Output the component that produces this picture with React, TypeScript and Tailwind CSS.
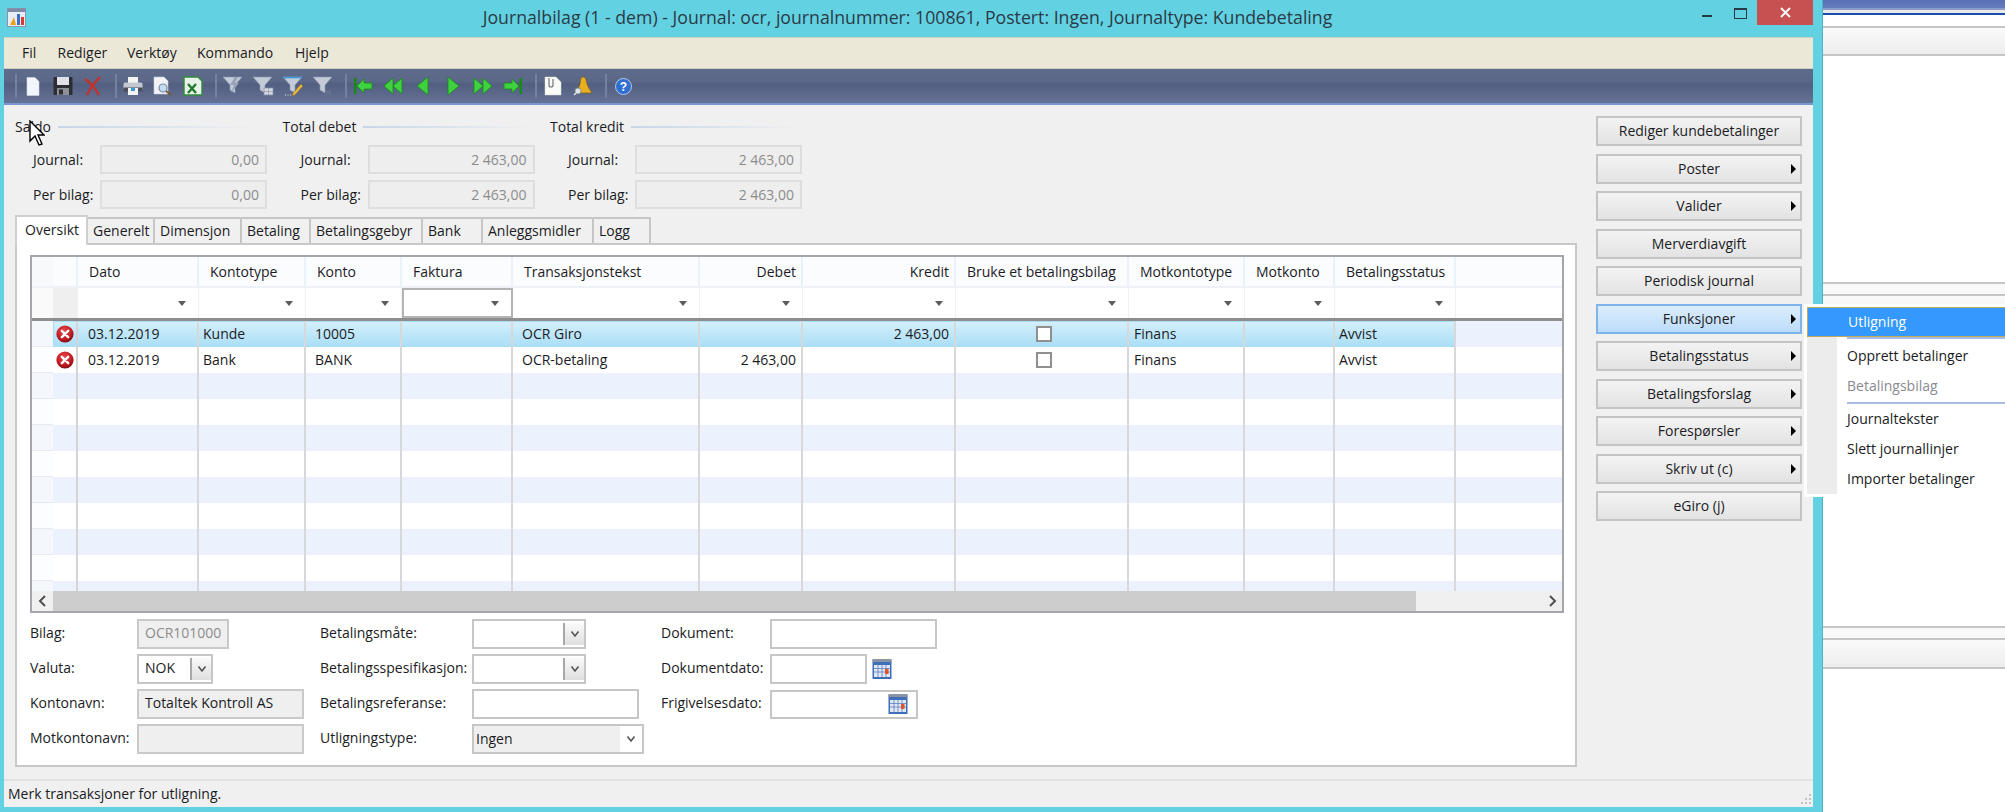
const columns = [
  { name: 'Dato', w: 121, pad: 'pl-[10px]' },
  { name: 'Kontotype', w: 107, pad: 'pl-[4px]' },
  { name: 'Konto', w: 96, pad: 'pl-[9px]' },
  { name: 'Faktura', w: 111, pad: 'pl-[4px]' },
  { name: 'Transaksjonstekst', w: 187, pad: 'pl-[9px]' },
  { name: 'Debet', w: 103, right: true },
  { name: 'Kredit', w: 153, right: true },
  { name: 'Bruke et betalingsbilag', w: 173, pad: 'pl-[4px]' },
  { name: 'Motkontotype', w: 116, pad: 'pl-[5px]' },
  { name: 'Motkonto', w: 90, pad: 'pl-[4px]' },
  { name: 'Betalingsstatus', w: 121, pad: 'pl-[4px]' },
];

const rows = [
  ['03.12.2019', 'Kunde', '10005', '', 'OCR Giro', '', '2 463,00', '', 'Finans', '', 'Avvist'],
  ['03.12.2019', 'Bank', 'BANK', '', 'OCR-betaling', '2 463,00', '', '', 'Finans', '', 'Avvist'],
];

const sideButtons = [
  { label: 'Rediger kundebetalinger' },
  { label: 'Poster', arrow: true },
  { label: 'Valider', arrow: true },
  { label: 'Merverdiavgift' },
  { label: 'Periodisk journal' },
  { label: 'Funksjoner', arrow: true, active: true },
  { label: 'Betalingsstatus', arrow: true },
  { label: 'Betalingsforslag', arrow: true },
  { label: 'Forespørsler', arrow: true },
  { label: 'Skriv ut (c)', arrow: true },
  { label: 'eGiro (j)' },
];

const tabs = [
  { label: 'Generelt', w: 67 },
  { label: 'Dimensjon', w: 87 },
  { label: 'Betaling', w: 69 },
  { label: 'Betalingsgebyr', w: 112 },
  { label: 'Bank', w: 60 },
  { label: 'Anleggsmidler', w: 111 },
  { label: 'Logg', w: 57 },
];

function Funnel({ children }: { children?: React.ReactNode }) {
  return (
    <svg width="22" height="20" viewBox="0 0 22 20">
      <path d="M1 1h19l-7 8v8l-5-3V9z" fill="#c3cad8" stroke="#8c97ae" strokeWidth="0.6" />
      {children}
    </svg>
  );
}

function Arrow({ kind }: { kind: string }) {
  const fill = '#3fd13f';
  const line = '#168a16';
  const shapes: Record<string, React.ReactNode> = {
    first: (
      <>
        <rect x="1" y="2" width="2.4" height="16" fill={line} />
        <path d="M4 10l7-7v4h8v6h-8v4z" fill={fill} stroke={line} strokeWidth="0.8" />
      </>
    ),
    rew: (
      <>
        <path d="M1 10l9-8v16z" fill={fill} stroke={line} strokeWidth="0.8" />
        <path d="M10 10l9-8v16z" fill={fill} stroke={line} strokeWidth="0.8" />
      </>
    ),
    prev: <path d="M4 10l11-9v18z" fill={fill} stroke={line} strokeWidth="0.8" />,
    next: <path d="M16 10L5 1v18z" fill={fill} stroke={line} strokeWidth="0.8" />,
    fwd: (
      <>
        <path d="M10 10L1 2v16z" fill={fill} stroke={line} strokeWidth="0.8" />
        <path d="M19 10l-9-8v16z" fill={fill} stroke={line} strokeWidth="0.8" />
      </>
    ),
    last: (
      <>
        <rect x="16.6" y="2" width="2.4" height="16" fill={line} />
        <path d="M16 10L9 3v4H1v6h8v4z" fill={fill} stroke={line} strokeWidth="0.8" />
      </>
    ),
  };
  return (
    <svg width="20" height="20" viewBox="0 0 20 20">
      {shapes[kind]}
    </svg>
  );
}

function Slot({ children }: { children: React.ReactNode }) {
  return <div className="w-[30px] h-full flex items-center justify-center">{children}</div>;
}

function Sep({ first }: { first?: boolean }) {
  return <div className={`w-[2px] h-[24px] bg-[#75819e] mr-px ${first ? '' : 'ml-[7px]'}`} />;
}

function Toolbar() {
  return (
    <div className="h-[36px] pl-[11px] flex items-center border-b-2 border-[#7b97cf] bg-[linear-gradient(#5f6b8a_0%,#5c6887_35%,#525f80_45%,#657296_100%)]">
      <Sep first />
      <Slot>
        <svg width="14" height="19" viewBox="0 0 14 19">
          <path d="M1 0.5h8l4 4v14H1z" fill="#f2f5fb" stroke="#cfd8e8" strokeWidth="0.6" />
        </svg>
      </Slot>
      <Slot>
        <svg width="20" height="20" viewBox="0 0 20 20">
          <rect x="0.5" y="1" width="19" height="18" rx="1" fill="#2c2e34" />
          <rect x="4" y="1" width="12" height="8" fill="#dfe2e9" />
          <rect x="4" y="12" width="12" height="7" fill="#8d9097" />
          <rect x="6" y="13.5" width="4" height="5" fill="#2c2e34" />
        </svg>
      </Slot>
      <Slot>
        <svg width="20" height="20" viewBox="0 0 20 20">
          <path d="M2 3c6 4 10 9 14 16M17 1C12 6 7 12 4 19" fill="none" stroke="#c4302a" strokeWidth="2.4" />
        </svg>
      </Slot>
      <Sep />
      <Slot>
        <svg width="20" height="20" viewBox="0 0 20 20">
          <rect x="5" y="1" width="10" height="6" fill="#f4f4f4" />
          <rect x="0.5" y="6.5" width="19" height="8" rx="1.5" fill="#c3c7cf" />
          <rect x="0.5" y="11.5" width="19" height="4" fill="#4a4e5a" />
          <rect x="5" y="12" width="10" height="7" fill="#f4f4f4" />
          <rect x="8" y="12" width="4" height="3" fill="#3c9ad6" />
        </svg>
      </Slot>
      <Slot>
        <svg width="20" height="20" viewBox="0 0 20 20">
          <path d="M1 1h10l4 4v13H1z" fill="#f1f3f7" stroke="#c9cfdb" strokeWidth="0.6" />
          <circle cx="10" cy="12" r="4" fill="#c4dcf2" stroke="#7b8aa0" strokeWidth="1.2" />
          <path d="M13 15l5 4" stroke="#7a5a30" strokeWidth="2" />
        </svg>
      </Slot>
      <Slot>
        <svg width="20" height="20" viewBox="0 0 20 20">
          <path d="M1 1h14l4 4v14H1z" fill="#e8f2e8" stroke="#2f8a3c" strokeWidth="1.4" />
          <path d="M5 8l8 9M13 8l-8 9" stroke="#1f7a2c" strokeWidth="2.4" />
        </svg>
      </Slot>
      <Sep />
      <Slot>
        <Funnel>
          <path d="M13 1L8 9h4l-3 8 8-10h-4l3-6z" fill="#98a2b6" />
        </Funnel>
      </Slot>
      <Slot>
        <Funnel>
          <rect x="12" y="12" width="9" height="7" fill="#d3d8e2" stroke="#8791a8" strokeWidth="0.7" />
          <path d="M12 15.5h9M16.5 12v7" stroke="#8791a8" strokeWidth="0.6" />
        </Funnel>
      </Slot>
      <Slot>
        <Funnel>
          <path d="M1 1.5h19" stroke="#3c9ad6" strokeWidth="1.6" />
          <path d="M19 8l2 2-8 9-3 1 1-3z" fill="#e8b83c" stroke="#7a5a30" strokeWidth="0.5" />
          <path d="M3 19h1M5.5 19h1M8 19h1" stroke="#e8ecf4" strokeWidth="1" />
        </Funnel>
      </Slot>
      <Slot>
        <Funnel>
          <path d="M14 14l5 5M19 14l-5 5" stroke="#6b7590" strokeWidth="1.2" />
        </Funnel>
      </Slot>
      <Sep />
      <Slot><Arrow kind="first" /></Slot>
      <Slot><Arrow kind="rew" /></Slot>
      <Slot><Arrow kind="prev" /></Slot>
      <Slot><Arrow kind="next" /></Slot>
      <Slot><Arrow kind="fwd" /></Slot>
      <Slot><Arrow kind="last" /></Slot>
      <Sep />
      <Slot>
        <svg width="18" height="20" viewBox="0 0 18 20">
          <path d="M1 1h11l5 5v13H1z" fill="#fbfbf7" stroke="#d8d8d0" strokeWidth="0.5" />
          <path d="M5 2v7a2 2 0 004 0V3" fill="none" stroke="#6f7480" strokeWidth="1.2" />
        </svg>
      </Slot>
      <Slot>
        <svg width="20" height="20" viewBox="0 0 20 20">
          <path d="M10 1c3 0 3 3 4 7 1 3 3 6 5 9H3c2-3 3-6 4-9 1-4 0-7 3-7z" fill="#e8b020" stroke="#7a5a20" strokeWidth="0.7" />
          <circle cx="5" cy="15" r="3" fill="#dde6f0" stroke="#8c8c80" strokeWidth="0.9" />
          <path d="M3 17l-2 2" stroke="#e8e8e0" strokeWidth="1.4" />
        </svg>
      </Slot>
      <Sep />
      <Slot>
        <svg width="17" height="17" viewBox="0 0 17 17">
          <circle cx="8.5" cy="8.5" r="8" fill="#2f6fd0" stroke="#cfe0f8" strokeWidth="0.8" />
          <text x="8.5" y="13" textAnchor="middle" fontSize="12" fontWeight="700" fill="#fff" fontFamily="Liberation Sans, sans-serif">?</text>
        </svg>
      </Slot>
    </div>
  );
}

function StatField({ label, value }: { label: string; value: string }) {
  return (
    <div className="flex items-center h-[29px]">
      <span className="w-[85px] pl-[18px] whitespace-nowrap">{label}</span>
      <div className="w-[167px] h-full border-2 border-[#dedede] bg-[#eeeeee] text-[#8c8c8c] flex items-center justify-end pr-[6px]">
        {value}
      </div>
    </div>
  );
}

function StatGroup({ title, value, lineW }: { title: string; value: string; lineW: number }) {
  return (
    <div className="w-[267.5px] shrink-0">
      <div className="h-[22px] flex items-center gap-[7px]">
        <span className="whitespace-nowrap">{title}</span>
        <div style={{ width: lineW }} className="h-[2px] bg-[linear-gradient(to_right,#c6d6e8,#f0f0f0)]" />
      </div>
      <div className="mt-[7px] flex flex-col gap-[6px]">
        <StatField label="Journal:" value={value} />
        <StatField label="Per bilag:" value={value} />
      </div>
    </div>
  );
}

function ErrorIcon() {
  return (
    <svg width="18" height="18" viewBox="0 0 18 18">
      <defs>
        <radialGradient id="errFill" cx="45%" cy="35%" r="70%">
          <stop offset="0%" stopColor="#ea4a50" />
          <stop offset="65%" stopColor="#c01a20" />
          <stop offset="100%" stopColor="#6e080e" />
        </radialGradient>
      </defs>
      <circle cx="9" cy="9" r="8.6" fill="url(#errFill)" />
      <path d="M5.8 5.8l6.4 6.4M12.2 5.8l-6.4 6.4" stroke="#fff" strokeWidth="2.4" strokeLinecap="round" />
    </svg>
  );
}

function GridTable() {
  const bodyRows = Array.from({ length: 11 });
  return (
    <div className="ml-[13px] mr-[11px] h-[358px] border-2 border-[#a4a6ae] flex flex-col bg-white">
      <div className="h-[29px] flex bg-[#fbfcfe]">
        <div className="w-[21px] bg-[#f8f9fb]" />
        <div className="w-[25px] border-r-2 border-[#eaf1fb]" />
        {columns.map((c) => (
          <div
            key={c.name}
            style={{ width: c.w }}
            className={`h-full flex items-center whitespace-nowrap border-r-2 border-[#eaf1fb] ${c.right ? 'justify-end pr-[5px]' : 'pl-[11px]'}`}
          >
            {c.name}
          </div>
        ))}
      </div>
      <div className="h-[2px] bg-[#eef2f8]" />
      <div className="h-[33px] flex border-b-[3px] border-[#8e8e8e]">
        <div className="w-[21px] bg-[#fafafa]" />
        <div className="w-[25px] bg-[#efefef]" />
        {columns.map((c) => (
          <div
            key={c.name}
            style={{ width: c.w }}
            className={`h-[30px] flex items-center justify-end pr-[12px] ${c.name === 'Faktura' ? 'border-2 border-[#b4b4b4]' : 'border-r border-[#eef2f8]'}`}
          >
            <div className="w-0 h-0 border-l-[4px] border-r-[4px] border-t-[5px] border-l-transparent border-r-transparent border-t-[#5c5c5c]" />
          </div>
        ))}
      </div>
      <div className="h-[270px] overflow-hidden">
        {bodyRows.map((_, i) => {
          const data = rows[i];
          const selected = i === 0;
          return (
            <div key={i} className={`h-[26px] flex ${i % 2 === 0 ? 'bg-[#ecf2fd]' : 'bg-white'}`}>
              <div className={`w-[21px] border-b border-[#e6ebf3] ${i % 2 === 0 ? 'bg-[#f4f8fd]' : 'bg-[#fcfdfe]'}`} />
              <div
                className={`flex ${selected ? 'shadow-[inset_0_0_0_1px_#a9dcf5] bg-[linear-gradient(#d5f0fc,#a9def6)]' : ''}`}
              >
                <div className="w-[25px] flex items-center justify-center border-r-2 border-[#d4d4d4]">
                  {data && <ErrorIcon />}
                </div>
                {columns.map((c, j) => (
                  <div
                    key={c.name}
                    style={{ width: c.w }}
                    className={`flex items-center whitespace-nowrap border-r-2 border-[#d8d8d8] ${c.right ? 'justify-end pr-[5px]' : c.pad}`}
                  >
                    {data?.[j]}
                    {data && j === 7 && (
                      <div className="mx-auto w-[16px] h-[16px] border-2 border-[#8f8f8f] bg-white" />
                    )}
                  </div>
                ))}
              </div>
            </div>
          );
        })}
      </div>
      <div className="h-[20px] flex bg-[#f0f0f0]">
        <div className="w-[21px] flex items-center justify-center">
          <svg width="9" height="12" viewBox="0 0 9 12">
            <path d="M7 1L2 6l5 5" fill="none" stroke="#505050" strokeWidth="2" />
          </svg>
        </div>
        <div className="w-[1363px] bg-[#cdcdcd]" />
        <div className="flex-1 flex items-center justify-end pr-[5px]">
          <svg width="9" height="12" viewBox="0 0 9 12">
            <path d="M2 1l5 5-5 5" fill="none" stroke="#505050" strokeWidth="2" />
          </svg>
        </div>
      </div>
    </div>
  );
}

function Box({ w, disabled, children }: { w: number; disabled?: boolean; children?: React.ReactNode }) {
  return (
    <div
      style={{ width: w }}
      className={`h-[30px] border-2 flex items-center pl-[6px] pb-[2px] whitespace-nowrap ${disabled ? 'border-[#c9c9c9] bg-[#efefef]' : 'border-[#c6c6c6] bg-white'}`}
    >
      {children}
    </div>
  );
}

function Chevron() {
  return (
    <svg width="10" height="8" viewBox="0 0 10 8">
      <path d="M1.5 1.5L5 6l3.5-4.5" fill="none" stroke="#555" strokeWidth="1.6" />
    </svg>
  );
}

function Combo({ w, value }: { w: number; value?: string }) {
  return (
    <div style={{ width: w }} className="h-[30px] border-2 border-[#c6c6c6] bg-white flex items-center">
      <span className="flex-1 pl-[6px] pb-[2px]">{value}</span>
      <div className="w-[21px] h-[22px] border-l-2 border-[#a8a8a8] bg-[linear-gradient(#fafafa,#dfdfdf)] flex items-center justify-center">
        <Chevron />
      </div>
    </div>
  );
}

function Calendar() {
  return (
    <svg width="20" height="21" viewBox="0 0 20 21">
      <rect x="0.5" y="1" width="19" height="19" fill="#3f6fb8" />
      <rect x="0.5" y="0" width="19" height="3" fill="#8a93a3" />
      <rect x="2" y="6" width="16" height="12" fill="#dfe8f5" />
      <path d="M2 9.5h16M2 13h16M6 6v12M10 6v12M14 6v12" stroke="#5d7fb8" strokeWidth="0.8" />
      <rect x="13" y="10" width="3.5" height="5" fill="#e0552f" />
    </svg>
  );
}

function FormRow({ label, w, children }: { label: string; w: number; children: React.ReactNode }) {
  return (
    <div className="flex items-center h-[30px]">
      <span style={{ width: w }} className="whitespace-nowrap pb-[2px]">{label}</span>
      {children}
    </div>
  );
}

function FormArea() {
  return (
    <div className="ml-[13px] mt-[6px] flex">
      <div className="w-[290px] flex flex-col gap-[5px]">
        <FormRow label="Bilag:" w={107}>
          <Box w={92} disabled><span className="text-[#8c8c8c]">OCR101000</span></Box>
        </FormRow>
        <FormRow label="Valuta:" w={107}>
          <Combo w={76} value="NOK" />
        </FormRow>
        <FormRow label="Kontonavn:" w={107}>
          <Box w={167} disabled>Totaltek Kontroll AS</Box>
        </FormRow>
        <FormRow label="Motkontonavn:" w={107}>
          <Box w={167} disabled />
        </FormRow>
      </div>
      <div className="w-[341px] flex flex-col gap-[5px]">
        <FormRow label="Betalingsmåte:" w={152}>
          <Combo w={114} />
        </FormRow>
        <FormRow label="Betalingsspesifikasjon:" w={152}>
          <Combo w={114} />
        </FormRow>
        <FormRow label="Betalingsreferanse:" w={152}>
          <Box w={167} />
        </FormRow>
        <FormRow label="Utligningstype:" w={152}>
          <div className="w-[172px] h-[30px] border-2 border-[#c6c6c6] bg-white flex">
            <div className="w-[146px] bg-[#efefef] flex items-center pl-[2px]">Ingen</div>
            <div className="flex-1 flex items-center justify-center"><Chevron /></div>
          </div>
        </FormRow>
      </div>
      <div className="flex flex-col gap-[5px]">
        <FormRow label="Dokument:" w={109}>
          <Box w={167} />
        </FormRow>
        <FormRow label="Dokumentdato:" w={109}>
          <Box w={97} />
          <div className="ml-[5px] flex"><Calendar /></div>
        </FormRow>
        <FormRow label="Frigivelsesdato:" w={109}>
          <div className="w-[148px] h-[29px] border-2 border-[#c6c6c6] bg-white flex items-center justify-end pr-[8px]">
            <Calendar />
          </div>
        </FormRow>
      </div>
    </div>
  );
}

function SideButton({ label, arrow, active }: { label: string; arrow?: boolean; active?: boolean }) {
  return (
    <div
      className={`relative h-[30px] border-2 flex items-center justify-center ${
        active
          ? 'border-[#7eb4ea] bg-[linear-gradient(#dcedfd,#bcdcfa)]'
          : 'border-[#c4c4c4] bg-[linear-gradient(#f3f3f3,#e3e3e3)]'
      }`}
    >
      {label}
      {arrow && (
        <div className="absolute right-[4px] top-[8px] w-0 h-0 border-t-[5px] border-b-[5px] border-l-[5px] border-t-transparent border-b-transparent border-l-black" />
      )}
    </div>
  );
}

function RightBackground() {
  return (
    <div className="flex-1 flex flex-col bg-white">
      <div className="h-[8px] bg-[linear-gradient(#586fb4,#667dbd)]" />
      <div className="h-[2px] bg-[#8b9ac9]" />
      <div className="h-[3px] bg-[#e9e9e9]" />
      <div className="h-[2px] bg-[#1a4fb0]" />
      <div className="h-[11px] bg-white" />
      <div className="h-[30px] border-y-2 border-[#c6c6c6] bg-[linear-gradient(#fafafa,#ededed)]" />
      <div className="h-[226px]" />
      <div className="h-[12px] border-t-2 border-[#c6c6c6] bg-[#f9f9f9]" />
      <div className="h-[30px] border-t-2 border-[#c6c6c6] bg-[linear-gradient(#fafafa,#ededed)]" />
      <div className="h-[302px]" />
      <div className="h-[12px] border-t-2 border-[#c6c6c6] bg-[#f9f9f9]" />
      <div className="h-[31px] border-y-2 border-[#c6c6c6] bg-[linear-gradient(#fafafa,#ededed)]" />
    </div>
  );
}

function PopupMenu() {
  const item = 'h-[30px] pl-[40px] flex items-center';
  return (
    <div className="absolute left-[1804px] top-[304px] right-0 h-[193px] bg-white p-[3px] pr-0 text-[#1b1b24]">
      <div className="relative h-full bg-[linear-gradient(to_right,#ececec_30px,#ffffff_30px)]">
        <div className="h-[30px] pl-[40px] flex items-center bg-[#3399ff] border-l border-y border-[#c2a75c] text-white">
          Utligning
        </div>
        <div className="ml-[40px] h-[2px] bg-[#a9bde0]" />
        <div className="mt-[2px]">
          <div className={item}>Opprett betalinger</div>
          <div className={`${item} text-[#8a8a92]`}>Betalingsbilag</div>
          <div className="ml-[40px] h-[2px] mt-px bg-[#a9bde0]" />
          <div className={item}>Journaltekster</div>
          <div className={item}>Slett journallinjer</div>
          <div className={item}>Importer betalinger</div>
        </div>
      </div>
    </div>
  );
}

export default function App() {
  return (
    <div className="relative w-[2005px] h-[812px] overflow-hidden flex font-['Open_Sans',sans-serif] text-[14px] leading-none text-[#1b1b24]">
      <div className="w-[1823px] h-full flex flex-col bg-[#62d2e3] border-r border-[#4ab5c9]">
        <div className="h-[37px] pr-[7px] grid grid-cols-[1fr_auto_1fr]">
          <div className="pl-[7px] pt-[8px]">
            <svg width="19" height="19" viewBox="0 0 19 19">
              <rect x="0.5" y="0.5" width="18" height="18" fill="#e8ecf4" stroke="#8c94a8" />
              <rect x="0.5" y="0.5" width="18" height="3.5" fill="#7d8aa8" />
              <path d="M3 17l4-8 2 8z" fill="#e8a020" />
              <rect x="10" y="6" width="3" height="11" fill="#3c70c8" />
              <rect x="14" y="9" width="3" height="8" fill="#d04030" />
            </svg>
          </div>
          <div className="text-[17.7px] text-[#2b3a46] flex items-center whitespace-nowrap pb-[1px]">
            Journalbilag (1 - dem) - Journal: ocr, journalnummer: 100861, Postert: Ingen, Journaltype: Kundebetaling
          </div>
          <div className="flex justify-end items-start pr-[2px]">
            <div className="w-[10px] h-[2px] mt-[15px] bg-[#263a44]" />
            <div className="w-[13px] h-[11px] mt-[8px] ml-[22px] border border-t-2 border-[#263a44]" />
            <div className="w-[56px] h-[25px] ml-[10px] bg-[#c75050] flex items-center justify-center">
              <svg width="11" height="11" viewBox="0 0 11 11">
                <path d="M1 1l9 9M10 1l-9 9" stroke="#fff" strokeWidth="1.8" />
              </svg>
            </div>
          </div>
        </div>

        <div className="ml-[4px] mr-[9px] h-[770px] flex flex-col bg-[#f0f0f0]">
          <div className="h-[32px] pl-[18px] flex items-center bg-[#ebe8d8] border-y border-[#d0cfc0]">
            <span className="w-[35.5px]">Fil</span>
            <span className="w-[69.5px]">Rediger</span>
            <span className="w-[70px]">Verktøy</span>
            <span className="w-[98px]">Kommando</span>
            <span>Hjelp</span>
          </div>
          <Toolbar />

          <div className="h-[674px] pl-[11px] flex">
            <div className="w-[1562px] pt-[11px]">
              <div className="flex">
                <StatGroup title="Saldo" value="0,00" lineW={200} />
                <StatGroup title="Total debet" value="2 463,00" lineW={170} />
                <StatGroup title="Total kredit" value="2 463,00" lineW={170} />
              </div>
              <div className="mt-[6px] h-[30px] flex items-end">
                <div className="relative z-10 w-[73px] h-[30px] bg-white border-2 border-b-0 border-[#cfcfcf] pl-[8px] pt-[6px]">
                  Oversikt
                </div>
                {tabs.map((t) => (
                  <div
                    key={t.label}
                    style={{ width: t.w }}
                    className="h-[26px] mb-[2px] border-2 border-b-0 border-l-0 border-[#c6c6c6] bg-[#f0f0f0] pl-[5px] flex items-center whitespace-nowrap"
                  >
                    {t.label}
                  </div>
                ))}
              </div>
              <div className="-mt-[2px] h-[524px] bg-white border-2 border-[#c8c8c8] pt-[10px]">
                <GridTable />
                <FormArea />
              </div>
            </div>
            <div className="ml-[19px] w-[206px] pt-[11px] flex flex-col gap-[7.5px]">
              {sideButtons.map((b) => (
                <SideButton key={b.label} label={b.label} arrow={b.arrow} active={b.active} />
              ))}
            </div>
          </div>

          <div className="h-[28px] border-t-2 border-[#e2e2e2] pl-[4px] flex items-center justify-between">
            <span>Merk transaksjoner for utligning.</span>
            <svg width="12" height="12" viewBox="0 0 12 12" className="mt-[10px] mr-[1px]">
              <path d="M9 1h2v2H9zM5 5h2v2H5zM9 5h2v2H9zM1 9h2v2H1zM5 9h2v2H5zM9 9h2v2H9z" fill="#c4c4c4" />
            </svg>
          </div>
        </div>
      </div>

      <RightBackground />
      <PopupMenu />

      {/* mouse pointer over the Saldo label */}
      <svg width="16" height="27" viewBox="0 0 16 27" className="absolute left-[29px] top-[120px]">
        <path d="M1 1v20l5-5 4 9 3-1-4-9h6z" fill="#fff" stroke="#000" strokeWidth="1.4" />
      </svg>
    </div>
  );
}
